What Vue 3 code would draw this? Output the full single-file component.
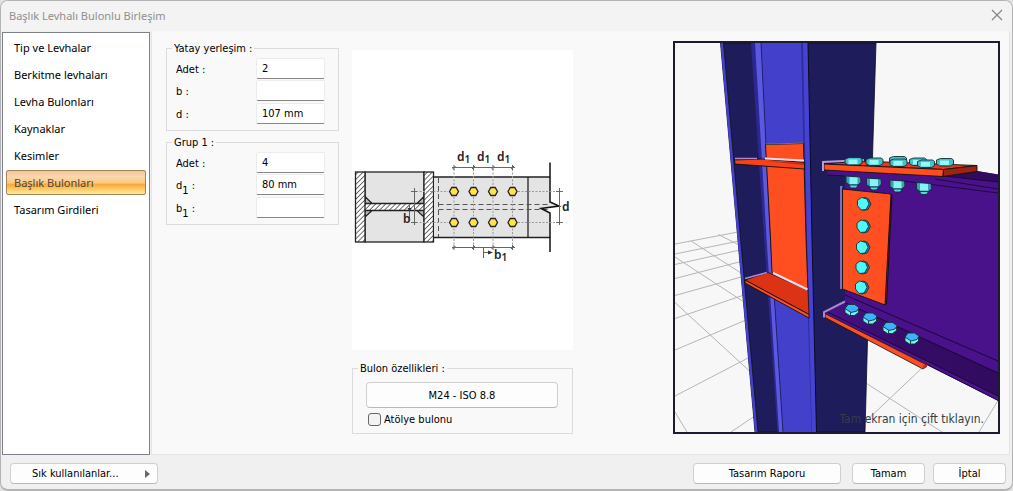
<script setup>
import { ref } from 'vue'

const pages = [
  'Tip ve Levhalar',
  'Berkitme levhaları',
  'Levha Bulonları',
  'Kaynaklar',
  'Kesimler',
  'Başlık Bulonları',
  'Tasarım Girdileri',
]
const current = ref('Başlık Bulonları')

const groups = ref([
  {
    title: 'Yatay yerleşim :',
    fields: [
      { id: 'h-count', name: 'Adet', value: '2' },
      { id: 'h-b', name: 'b', value: '' },
      { id: 'h-d', name: 'd', value: '107 mm' },
    ],
  },
  {
    title: 'Grup 1 :',
    fields: [
      { id: 'g-count', name: 'Adet', value: '4' },
      { id: 'g-d', name: 'd', sub: '1', value: '80 mm' },
      { id: 'g-b', name: 'b', sub: '1', value: '' },
    ],
  },
])
const shopBolt = ref(false)

const boltX = [454, 473.5, 493, 512.5]
const boltY = [191.5, 222.5]

const gridLines = [
  'M675 244L738 232', 'M675 254L739 241', 'M675 264.5L740 250', 'M675 278.5L741 261.5',
  'M675 295.5L743 276.5', 'M675 318.5L744 295', 'M675 350L746 320', 'M675 396L749 357.5',
  'M731 432L754 416.5', 'M718.5 234.5L739 245', 'M691 241L741 273', 'M675 257L744 302',
  'M675 302.5L750 371.5', 'M675 412L687 432', 'M923 367L865 422', 'M865 382.5L942 432',
  'M998 400.5L979 432',
].join('')

const topBolts = [[898, 160], [918, 161.5], [853.5, 161], [874.5, 161.5], [898.5, 162.5], [926, 163.5], [945, 162]]
const nuts = [[853.5, 180.5], [874, 182.5], [897.5, 184.5], [924, 187]]
const faceBolts = [[864, 204], [863.5, 226.5], [863, 247.5], [862.5, 267.5], [862, 287.5]]
const lowBolts = [[851.5, 309.5], [869.5, 318], [889.5, 327.5], [911.5, 338]]
</script>

<template>
  <div class="window">
    <header class="titlebar">
      <h1>Başlık Levhalı Bulonlu Birleşim</h1>
      <button class="close" type="button" aria-label="Kapat">
        <svg width="12" height="12" viewBox="0 0 12 12"><path d="M1 1L11 11M11 1L1 11" stroke="#858585" stroke-width="1.2" /></svg>
      </button>
    </header>

    <div class="body">
      <nav class="sidebar">
        <button
          v-for="p in pages"
          :key="p"
          type="button"
          :class="['nav-item', { active: p === current }]"
          @click="current = p"
        >{{ p }}</button>
      </nav>

      <main class="panel">
        <div class="col-form">
          <fieldset v-for="g in groups" :key="g.title" class="group">
            <legend>{{ g.title }}</legend>
            <div v-for="f in g.fields" :key="f.id" class="row">
              <label :for="f.id" :class="{ marked: f.sub }">{{ f.name }}<sub v-if="f.sub">{{ f.sub }}</sub> :</label>
              <input :id="f.id" v-model="f.value" type="text" />
            </div>
          </fieldset>
        </div>

        <div class="col-diagram">
          <div class="diagram">
            <svg viewBox="352 50 221 300" role="img" aria-label="b, d">
              <defs>
                <pattern id="hatch" width="3.500" height="3.500" patternUnits="userSpaceOnUse" patternTransform="rotate(45)">
                  <rect width="3.500" height="3.500" fill="#fff" />
                  <path d="M0 0V3.500" stroke="#333" stroke-width="1.4" />
                </pattern>
              </defs>
              <rect x="365" y="172" width="59" height="70" fill="#e4e4e4" stroke="#222" stroke-width="1.3" />
              <rect x="365" y="203.500" width="59" height="7" fill="url(#hatch)" />
              <path d="M365 196.500L372 203.500H365ZM424 196.500L417 203.500H424ZM365 217L372 210.500H365ZM424 217L417 210.500H424Z" fill="#bbb" stroke="#222" stroke-width="1.2" />
              <path d="M365.500 203.500H423.500M365.500 210.500H423.500" stroke="#222" stroke-width="1.4" />
              <rect x="355.500" y="172" width="9.500" height="70" fill="url(#hatch)" stroke="#222" stroke-width="1.3" />
              <rect x="424" y="172" width="9.500" height="70" fill="url(#hatch)" stroke="#222" stroke-width="1.3" />
              <path d="M434 177H550V202L559 206L541 209L550 213V237.500H434Z" fill="#e4e4e4" />
              <path d="M434 177H550M434 237.500H550M528 177V237.500" stroke="#222" stroke-width="1.3" fill="none" />
              <path d="M438.500 178V237M438.500 204.500H549M438.500 209.500H549" stroke="#555" stroke-width="1" stroke-dasharray="5 3" />
              <path d="M550 162.500V202L559 206L541 208.500L550 213V252" fill="none" stroke="#111" stroke-width="1.5" />
              <g stroke="#999" stroke-width="1" stroke-dasharray="2 1.500">
                <path v-for="x in boltX" :key="x" :d="`M${x} 169V246`" />
                <path d="M416 191.500H448M416 222.500H448M518 191.500H558M518 222.500H558" />
              </g>
              <g stroke="#666" stroke-width="1" fill="none">
                <path d="M452 167.500H515M452 247.500H515M414.500 188V225M559.500 188V225" />
                <path d="M411 191.500H417M411 222.500H417M556 191.500H563M556 222.500H563M409.500 205V219M483.500 248V258M484 252.500H490" />
                <path v-for="x in boltX" :key="x" :d="`M${x} 165V170M${x - 1.5} 169L${x + 1.5} 166M${x} 245V250M${x - 1.5} 249L${x + 1.5} 246`" />
              </g>
              <path d="M488 250.500L493 252.500L488 254.500ZM407.500 208L409.500 212L411.500 208Z" fill="#333" />
              <g fill="#ffe34a" stroke="#222" stroke-width="1.3">
                <template v-for="y in boltY" :key="y">
                  <path v-for="x in boltX" :key="x" :d="`M${x - 4.5} ${y}l2.300 -4h4.400l2.300 4l-2.300 4h-4.400z`" />
                </template>
              </g>
              <g class="dims">
                <text x="457" y="161">d<tspan class="small" dy="2">1</tspan></text>
                <text x="477" y="161">d<tspan class="small" dy="2">1</tspan></text>
                <text x="497" y="161">d<tspan class="small" dy="2">1</tspan></text>
                <text x="494" y="259">b<tspan class="small" dy="2">1</tspan></text>
                <text x="403" y="223">b</text>
                <text x="562" y="211">d</text>
              </g>
            </svg>
          </div>

          <fieldset class="group bolt">
            <legend>Bulon özellikleri :</legend>
            <button type="button" class="btn wide">M24 - ISO 8.8</button>
            <label class="check"><input v-model="shopBolt" type="checkbox" />Atölye bulonu</label>
          </fieldset>
        </div>

        <div class="viewport">
          <svg viewBox="675 43 323 389" preserveAspectRatio="xMidYMid slice" role="img" aria-label="3D">
            <defs>
              <linearGradient id="flange">
                <stop offset="0" stop-color="#481287" />
                <stop offset=".45" stop-color="#350c66" />
                <stop offset="1" stop-color="#310b5e" />
              </linearGradient>
            </defs>
            <rect x="675" y="43" width="323" height="389" fill="#f7f7f7" />
            <path :d="gridLines" stroke="#b5b5b5" stroke-width="1" fill="none" />

            <!-- column -->
            <path d="M720.500 43L755 432H865L873 140L876 43Z" fill="#1e1c5a" stroke="#0c0b20" stroke-width=".8" />
            <path d="M720.500 43H723.500L740.500 238L758 432H755L737.500 238Z" fill="#4340cc" />
            <path d="M723.500 43L740.500 238L758 432" stroke="#111" stroke-width=".8" fill="none" />
            <path d="M751 43H756L767 238L780 432H777.500L764 238Z" fill="#2b2892" />
            <path d="M755 43H761L770.500 238L783 432H779L766.500 238Z" fill="#5b59e0" />
            <path d="M761 43H802L806 238L812 432H783L770.500 238Z" fill="#4340cc" />
            <path d="M761 43L770.500 238L783 432" stroke="#1b1960" stroke-width=".8" fill="none" />
            <path d="M801 43H808L812 238L816.500 432H811.500L806 238Z" fill="#4643d2" />
            <path d="M801 43H803L807 238L812 432H811.500L805.500 238Z" fill="#302da0" />
            <path d="M808 43L812 238L816.500 432" stroke="#0c0b20" fill="none" />

            <!-- continuity plates -->
            <path d="M765.500 144.500L803.500 143.500L806 238L808 291L772 273L770.500 238Z" fill="#ff4e20" stroke="#111" stroke-width=".9" />
            <path d="M766 144L788 143.500L803 143" stroke="#5c8838" stroke-width="1.2" fill="none" />
            <path d="M734.500 160L762 159L804.500 162.500V169L735 164Z" fill="#f94217" stroke="#111" stroke-width=".9" />
            <path d="M764 161L804 163L804 165Z" fill="#b92e16" />
            <path d="M735 158.500H757" stroke="#aa85d0" stroke-width="1.500" />
            <path d="M765 158.500L804 160.500" stroke="#eeddf0" stroke-width="2" />
            <path d="M745 280L768 272.500L808 290L809 314.500Z" fill="#dd3315" stroke="#111" stroke-width=".8" />
            <path d="M745 280L809 314.500V318L745 283Z" fill="#ff4e20" stroke="#111" stroke-width=".9" />
            <path d="M745 278.500L767 272.500" stroke="#aa85d0" stroke-width="1.800" />
            <path d="M773 273L807.500 289.500" stroke="#eeddf0" stroke-width="2.200" />

            <!-- beam -->
            <path d="M827 170L977 171L998 174.500V400.500L826 314L845 301V176L828 175Z" fill="#4a128a" />
            <path d="M944 176L977 171L998 174.500V182Z" fill="#310b5e" />
            <path d="M828 175L845 176M900 180.500L998 193M935 179L998 189M944 176L998 182" stroke="#160530" stroke-width=".8" fill="none" />
            <path d="M845 302.500L998 373V396L826.500 311.500Z" fill="url(#flange)" />
            <path d="M826.500 311.500L998 396V400.500L826 314.500Z" fill="#4d138f" />
            <path d="M845 295L998 361M845 302.500L998 373M826.500 311.500L998 396M926 364L998 400.500" stroke="#160530" stroke-width=".9" fill="none" />

            <!-- top plate -->
            <g stroke="#111" stroke-width=".9">
              <path d="M824 164L860 161L977 165.500L943.500 169.500Z" fill="#e8391a" />
              <path d="M824 164L943.500 169.500L943 176.500L824 170Z" fill="#ff4e20" />
              <path d="M943.500 169.500L977 165.500V171.500L943 176.500Z" fill="#9c2410" />
            </g>
            <path d="M864 160L823 162V171" stroke="#b79ad8" stroke-width="2" fill="none" />
            <g stroke="#102c34" stroke-width=".9">
              <template v-for="b in topBolts" :key="b[0]">
                <path :d="`M${b[0] - 8.5} ${b[1] - 2}l4 -1.500h11l2 1.500v4l-3 2h-11l-3 -2z`" fill="#48bfcb" />
                <path :d="`M${b[0] - 5} ${b[1] - 1.5}h9v4.500h-9z`" fill="#91fbfb" stroke="none" />
              </template>
              <template v-for="b in nuts" :key="b[0]">
                <path :d="`M${b[0] - 4} ${b[1] + 3}h8v3l-2 1.500h-4l-2 -1.500z`" fill="#5bd5d9" />
                <path :d="`M${b[0] - 7.5} ${b[1] - 4.5}l14.500 1l.500 5l-3 3h-8.500l-3.500 -2.500z`" fill="#3ba0b5" />
                <path :d="`M${b[0] - 4} ${b[1] - 3.5}l8 .500v6.500h-8z`" fill="#84f4f4" stroke="none" />
              </template>
            </g>

            <!-- shear tab -->
            <path d="M891 194L892 195L886.500 304L884.500 305Z" fill="#9c2410" stroke="#111" />
            <path d="M842.500 189L891 194L885 305L842.500 289Z" fill="#ff4e20" stroke="#111" stroke-width=".9" />
            <path d="M842.500 187H841V289" stroke="#8b6bb5" stroke-width="2" fill="none" />
            <g v-for="b in faceBolts" :key="b[1]" stroke="#12343c" stroke-width=".9">
              <path :d="`M${b[0] - 4} ${b[1] - 5}l5 -1.500l3.500 1.500l2.500 5l-3 5.500l-4.500 1l-4 -3z`" fill="#287fa5" />
              <path :d="`M${b[0] - 6.5} ${b[1] - 3.5}l4 -3l5.500 1.500l2 5l-3 5.500l-5 .500l-3.500 -4.500z`" fill="#4dfafc" />
            </g>

            <!-- bottom plate -->
            <path d="M825 313.500L926 364.500L927 366L923 369L825 317.500Z" fill="#ff4e20" stroke="#111" stroke-width=".8" />
            <path d="M923 365.500L927 364.500V367L923 369Z" fill="#b92e16" />
            <path d="M824 317.500V312L845 301.500" stroke="#aa85d0" stroke-width="2" fill="none" />
            <g v-for="b in lowBolts" :key="b[0]" stroke="#12343c" stroke-width=".9">
              <path :d="`M${b[0] - 6.5} ${b[1] - 1}v4l4.500 3h5l4 -3v-5z`" fill="#74f2f2" />
              <path :d="`M${b[0] - 6.5} ${b[1] - 1}l3 -4h6.500l4.500 3l-2 3.500l-6 1.500z`" fill="#3bb2ff" />
              <path :d="`M${b[0] - 1} ${b[1] + 3}v3`" />
            </g>
          </svg>
          <p class="hint">Tam ekran için çift tıklayın.</p>
        </div>
      </main>
    </div>

    <footer class="footer">
      <button type="button" class="btn fav"><span>Sık kullanılanlar...</span>
        <svg width="5" height="8" viewBox="0 0 5 8"><path d="M0 0L5 4L0 8Z" fill="#666" /></svg>
      </button>
      <span class="spacer"></span>
      <button type="button" class="btn report">Tasarım Raporu</button>
      <span class="pair">
        <button type="button" class="btn">Tamam</button>
        <button type="button" class="btn">İptal</button>
      </span>
    </footer>
  </div>
</template>

<style>
body { background: #e2e2e2; }
</style>

<style scoped>
* { box-sizing: border-box; }
.window {
  display: flex;
  flex-direction: column;
  min-height: 100vh;
  background: #f0f0f0;
  border: 1px solid #b4b4b4;
  border-bottom-width: 2px;
  border-radius: 8px;
  overflow: hidden;
  font-family: "DejaVu Sans Condensed", "Noto Sans", sans-serif;
  font-size: 11px;
  line-height: 15px;
  color: #000;
}
button, input { font: inherit; color: inherit; }
.titlebar {
  display: flex;
  align-items: center;
  justify-content: space-between;
  height: 30px;
  padding: 0 9px 2px 8px;
  background: #f3f3f3;
}
h1 {
  margin: 0;
  font-family: "Noto Sans", sans-serif;
  font-size: 11px;
  font-weight: 400;
  color: #8f8f8f;
}
.close { display: flex; padding: 0; border: 0; background: none; }
.body { display: flex; flex: 1; padding-left: 1px; }
.sidebar {
  display: flex;
  flex-direction: column;
  gap: 2px;
  width: 148px;
  margin-top: 1px;
  padding: 2px 3px;
  border: 1px solid #7d828e;
  background: #fff;
  font-family: "Noto Sans", sans-serif;
}
.nav-item {
  height: 25px;
  padding: 0 7px;
  border: 1px solid transparent;
  border-radius: 2px;
  background: none;
  text-align: left;
}
.nav-item.active {
  border-color: #a38457;
  background: linear-gradient(#f3c69b 0, #fdd8ac 25%, #fcc982 52%, #f9a83c 58%, #fdda7c 88%, #fde99b 100%);
  color: #50463c;
}
.panel {
  display: flex;
  flex: 1;
  margin: 0 2px 0 1px;
  padding: 10px 9px 20px 14px;
  border: 1px solid #e5e5e5;
  border-top: 0;
  background: #f9f9f9;
}
.col-form { width: 173px; margin-right: 13px; }
.group {
  min-width: 0;
  margin: 0;
  padding: 2px 13px 5px 8px;
  border: 1px solid #dcdcdc;
}
.group + .group { margin-top: 4px; }
legend { margin-left: -3px; padding: 0 2px; }
.row { display: flex; justify-content: space-between; align-items: flex-start; min-height: 22px; }
.row:nth-of-type(2) { min-height: 23px; }
.row label { padding: 4px 1px 0; }
.row label.marked sub { font-size: 11px; line-height: 1; vertical-align: -5px; }
.row input {
  width: 69px;
  height: 21px;
  padding: 0 5px 1px;
  border: 1px solid #ececec;
  border-bottom-color: #868686;
  border-radius: 2px;
  background: #fff;
  outline: 0;
}
.col-diagram { display: flex; flex-direction: column; width: 221px; padding-top: 9px; }
.diagram { background: #fff; }
.diagram svg { display: block; width: 100%; }
.dims { font-family: "Noto Sans", sans-serif; font-size: 12px; font-weight: 600; fill: #222; }
.small { font-size: 10px; }
.bolt { margin-top: 11px; padding: 6px 14px 6px 13px; }
.bolt legend { margin-left: -8px; }
.btn {
  width: 73px;
  height: 21px;
  padding: 0;
  border: 1px solid #cfcfcf;
  border-bottom-color: #b9b9b9;
  border-radius: 4px;
  background: #fdfdfd;
}
.wide { display: block; width: 100%; height: 26px; }
.check { display: flex; align-items: center; gap: 3px; width: max-content; margin-top: 4px; padding-left: 2px; }
.check input {
  appearance: none;
  width: 13px;
  height: 13px;
  margin: 0;
  border: 1px solid #666;
  border-radius: 3px;
  background: #f3f3f3;
}
.viewport {
  position: relative;
  flex: 1;
  margin-left: 100px;
  border: 2px solid #1c1c30;
  background: #f7f7f7;
}
.viewport svg { position: absolute; width: 100%; height: 100%; }
.hint { position: absolute; right: 14px; bottom: 5px; margin: 0; font-size: 12px; color: #333f42; }
.footer { display: flex; gap: 11px; align-items: center; padding: 8px 6px 5px 9px; }
.spacer { flex: 1; }
.fav { display: flex; align-items: center; justify-content: space-between; width: 148px; padding: 0 7px 0 21px; }
.report { width: 148px; }
.pair { display: flex; gap: 8px; }
</style>
